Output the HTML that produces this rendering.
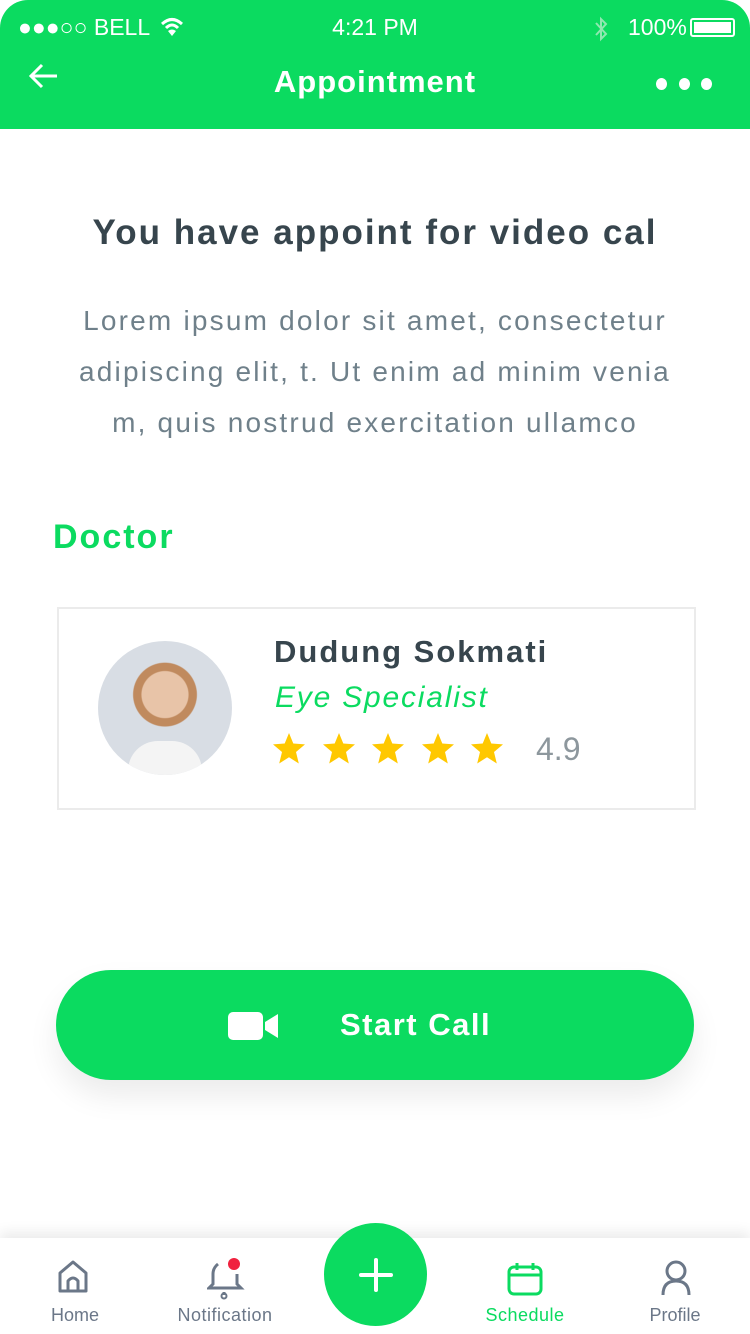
<!DOCTYPE html>
<html><head><style>
*{margin:0;padding:0;box-sizing:border-box}
body{width:750px;height:1334px;background:#fff;font-family:"Liberation Sans",sans-serif;position:relative;overflow:hidden}
.hdr{position:absolute;left:0;top:0;width:750px;height:129px;background:#0bdb60;border-radius:28px 28px 0 0;color:#fff}
.abs{position:absolute}
.c{text-align:center;width:750px;left:0}
</style></head><body>
<div class="hdr">
 <div class="abs" style="left:18px;top:14px;font-size:23px">●●●○○ BELL</div>
 <svg class="abs" style="left:160px;top:17px" width="24" height="20" viewBox="0 0 24 20"><path d="M2 7Q12-2 22 7M6 11Q12 5 18 11" stroke="#fff" stroke-width="3" fill="none"/><path d="M8 14L12 19 16 14Q12 11 8 14Z" fill="#fff"/></svg>
 <div class="abs c" style="top:14px;font-size:23px">4:21 PM</div>
 <svg class="abs" style="left:593px;top:15px" width="16" height="28" viewBox="0 0 16 28"><path d="M3 8L13 19 8 24V4L13 9 3 20" stroke="#8fe8b0" stroke-width="2" fill="none"/></svg>
 <div class="abs" style="left:628px;top:14px;font-size:23px">100%</div>
 <div class="abs" style="left:690px;top:18px;width:45px;height:19px;border:2px solid #fff;border-radius:3px;padding:2px"><div style="background:#fff;width:100%;height:100%"></div></div>
 <svg class="abs" style="left:28px;top:62px" width="32" height="28" viewBox="0 0 32 28"><path d="M29 14H4M14 3L3 14 14 25" stroke="#fff" stroke-width="3" fill="none"/></svg>
 <div class="abs c" style="top:64px;font-size:31px;font-weight:bold;letter-spacing:1px">Appointment</div>
 <div class="abs" style="left:656px;top:78px;width:56px;display:flex;justify-content:space-between"><i style="width:11px;height:12px;background:#fff;border-radius:50%"></i><i style="width:11px;height:12px;background:#fff;border-radius:50%"></i><i style="width:11px;height:12px;background:#fff;border-radius:50%"></i></div>
</div>
<div class="abs c" style="top:213px;font-size:35px;font-weight:bold;color:#37454d;letter-spacing:2px">You have appoint for video cal</div>
<div class="abs c" style="top:295px;font-size:28px;color:#6f808a;line-height:51px;letter-spacing:2.2px">Lorem ipsum dolor sit amet, consectetur<br>adipiscing elit, t. Ut enim ad minim venia<br>m, quis nostrud exercitation ullamco</div>
<div class="abs" style="left:53px;top:518px;font-size:34px;font-weight:bold;color:#0bdb60;letter-spacing:2px">Doctor</div>
<div class="abs" style="left:57px;top:607px;width:639px;height:203px;border:2px solid #ebebeb"></div>
<div class="abs" style="left:98px;top:641px;width:134px;height:134px;border-radius:50%;background:radial-gradient(circle at 50% 40%,#e8c4a8 0 22%,#c08a5e 23% 30%,#d8dde4 31%);overflow:hidden"><div style="position:absolute;left:30px;top:100px;width:74px;height:50px;background:#f4f4f4;border-radius:30px 30px 0 0"></div></div>
<div class="abs" style="left:274px;top:634px;font-size:31px;font-weight:bold;color:#37454d;letter-spacing:2px">Dudung Sokmati</div>
<div class="abs" style="left:275px;top:681px;font-size:30px;font-style:italic;color:#0bdb60;letter-spacing:1.8px">Eye Specialist</div>
<svg class="abs" style="left:272px;top:732px" width="236" height="34" viewBox="0 0 236 34">
<defs><path id="s" d="M16 1L20.3 11.5 32 12.4 23 20 25.8 31.5 16 25.3 6.2 31.5 9 20 0 12.4 11.7 11.5Z" fill="#ffc800"/></defs>
<use href="#s" x="1"/><use href="#s" x="51"/><use href="#s" x="100"/><use href="#s" x="150"/><use href="#s" x="199"/></svg>
<div class="abs" style="left:536px;top:731px;font-size:32px;color:#8d979d">4.9</div>
<div class="abs" style="left:56px;top:970px;width:638px;height:110px;border-radius:55px;background:#0bdb60;box-shadow:0 16px 30px rgba(0,0,0,0.08)"></div>
<svg class="abs" style="left:228px;top:1012px" width="50" height="28" viewBox="0 0 50 28"><rect x="0" y="0" width="35" height="28" rx="5" fill="#fff"/><path d="M37 10L50 2V26L37 18Z" fill="#fff"/></svg>
<div class="abs" style="left:340px;top:1007px;font-size:31px;font-weight:bold;color:#fff;letter-spacing:1.5px">Start Call</div>
<div class="abs" style="left:0;top:1238px;width:750px;height:96px;background:#fff;box-shadow:0 -6px 12px rgba(0,0,0,0.08)"></div>
<svg class="abs" style="left:57px;top:1260px" width="32" height="34" viewBox="0 0 32 34"><path d="M3 31V13L16 2 29 13V31ZM11 31V21Q16 15 21 21V31" stroke="#6b7788" stroke-width="3" fill="none" stroke-linejoin="round"/></svg>
<svg class="abs" style="left:207px;top:1258px" width="38" height="42" viewBox="0 0 38 42"><path d="M11 6Q6 10 6 16V26L2 30H34L30 26V16M17 34V37" stroke="#6b7788" stroke-width="3" fill="none"/><circle cx="17" cy="38" r="2.5" stroke="#6b7788" stroke-width="2" fill="none"/><circle cx="27" cy="6" r="6" fill="#f0223f"/></svg>
<div class="abs" style="left:324px;top:1223px;width:103px;height:103px;border-radius:50%;background:#0bdb60"></div>
<svg class="abs" style="left:358px;top:1257px" width="36" height="36"><path d="M18 3V33M3 18H33" stroke="#fff" stroke-width="4" stroke-linecap="round"/></svg>
<svg class="abs" style="left:506px;top:1262px" width="38" height="34" viewBox="0 0 38 34"><rect x="3" y="5" width="32" height="27" rx="5" stroke="#0bdb60" stroke-width="3" fill="none"/><path d="M3 13H35M11 1V8M27 1V8" stroke="#0bdb60" stroke-width="3"/></svg>
<svg class="abs" style="left:660px;top:1260px" width="32" height="36" viewBox="0 0 32 36"><circle cx="16" cy="11" r="9" stroke="#6b7788" stroke-width="3" fill="none"/><path d="M3 35Q3 21 16 21 29 21 29 35" stroke="#6b7788" stroke-width="3" fill="none"/></svg>
<div class="abs" style="left:50px;top:1305px;font-size:18px;color:#6b7788;width:50px;text-align:center">Home</div>
<div class="abs" style="left:170px;top:1305px;font-size:18px;color:#6b7788;width:110px;text-align:center;letter-spacing:.5px">Notification</div>
<div class="abs" style="left:475px;top:1305px;font-size:18px;color:#0bdb60;width:100px;text-align:center;letter-spacing:.5px">Schedule</div>
<div class="abs" style="left:640px;top:1305px;font-size:18px;color:#6b7788;width:70px;text-align:center">Profile</div>
</body></html>
